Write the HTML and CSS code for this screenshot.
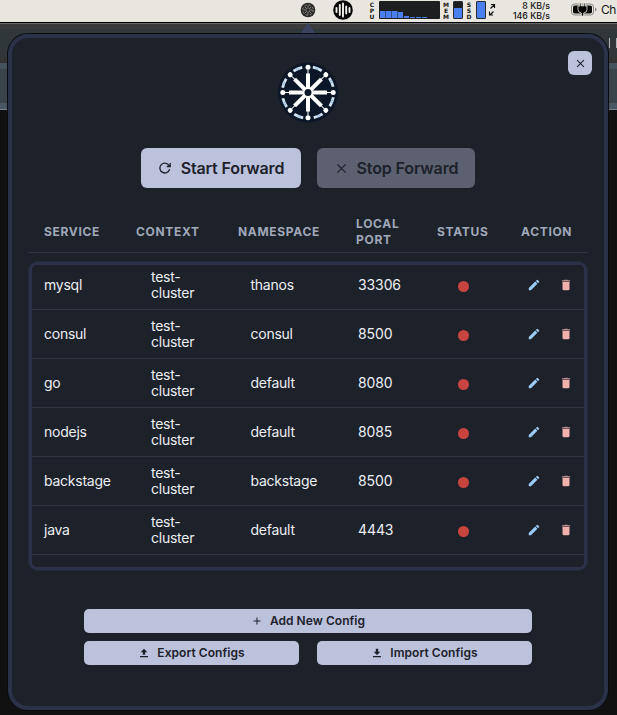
FILE: index.html
```html
<!DOCTYPE html>
<html lang="en">
<head>
<meta charset="utf-8">
<title>Port forwards</title>
<link rel="stylesheet" href="styles.css">
</head>
<body>
<svg class="defs" aria-hidden="true">
  <symbol id="pencil" viewBox="0 0 24 24"><path d="M3 17.25V21h3.75L17.81 9.94l-3.75-3.75L3 17.25zM20.71 7.04a1 1 0 0 0 0-1.41l-2.34-2.34a1 1 0 0 0-1.41 0l-1.83 1.83 3.75 3.75 1.83-1.83z" fill="currentColor"/></symbol>
  <symbol id="trash" viewBox="0 0 24 24"><path d="M6 7v12c0 1.1.9 2 2 2h8c1.1 0 2-.9 2-2V7z" fill="currentColor"/><path d="M19 4h-3.500l-1-1h-5l-1 1H5v2h14V4z" fill="currentColor" opacity=".75"/></symbol>
  <symbol id="cross" viewBox="0 0 12 12"><path d="M1.500 1.500l9 9m0-9l-9 9" stroke="currentColor" stroke-width="1.400" fill="none"/></symbol>
</svg>

<header class="menubar">
  <svg class="mi-wheel" viewBox="0 0 16 16"><circle cx="8" cy="8" r="7.300" fill="#2c2b2a"/><circle cx="8" cy="8" r="5.200" fill="none" stroke="#8f8d88" stroke-width="1" stroke-dasharray="2 2.080"/><path d="M8 3.500v9M3.500 8h9M4.800 4.800l6.400 6.400m0-6.400l-6.400 6.400" stroke="#a5a39d" stroke-width=".7"/><circle cx="8" cy="8" r="1.500" fill="#2c2b2a"/></svg>
  <svg class="mi-audio" viewBox="0 0 20 20"><circle cx="10" cy="10" r="9.800" fill="#050505"/><path d="M3.500 8v4M6.800 5v10M10 3.500v13M13.200 6.500v7M16.500 8v4" stroke="#f4f2ec" stroke-width="1.900" stroke-linecap="round"/></svg>
  <div class="vlabel cpu-label"><span>C</span><span>P</span><span>U</span></div>
  <svg class="cpu" viewBox="0 0 61 18"><rect width="61" height="18" rx="1" fill="#1d1e1f"/><path d="M1 17V10h5.500v7zM7 17V10h5.500v7zM13 17V10h5.500v7zM19 17v-6h5v6zM25 17v-2h5v2zM31 17v-1h5v1zM37 17v-1h5v1zM43 17v-1h5v1z" fill="#4a7ff0"/></svg>
  <div class="vlabel mem-label"><span>M</span><span>E</span><span>M</span></div>
  <div class="meter mem"></div>
  <div class="vlabel ssd-label"><span>S</span><span>S</span><span>D</span></div>
  <div class="meter"></div>
  <svg class="mi-arrows" viewBox="0 0 8 14"><path d="M2.500 5.500l3.500-3.500M3 1.500h3.500V5M5.500 8.500L2 12M1.500 8.500V12H5" stroke="#151515" stroke-width="1.200" fill="none"/></svg>
  <div class="net"><span>8 KB/s</span><span>146 KB/s</span></div>
  <svg class="battery" viewBox="0 0 26 13"><rect x=".5" y="1" width="22" height="11" rx="3" fill="none" stroke="#8b8984"/><rect x="2" y="2.500" width="19" height="8" rx="1.700" fill="#080808"/><path d="M24 4.500v4q1.500-.5 1.500-2t-1.500-2z" fill="#8b8984"/><path d="M9 0v3H7v3.500q0 3 3.300 3.500v3h2.400v-3q3.300-.5 3.300-3.500V3h-2V0h-1.500v3h-2V0z" fill="#080808" stroke="#e8e6df" stroke-width=".8"/></svg>
  <span class="clock">Ch</span>
</header>

<div class="desktop">
  <svg class="notch" viewBox="0 0 18 12"><path d="M0 12C3 10 7 1 9 0c2 1 6 10 9 12z" fill="#39425f"/></svg>
  <div class="ticks"></div>
  <main class="panel">
    <button class="close" aria-label="Close"><svg viewBox="0 0 12 12"><use href="#cross"/></svg></button>
    <svg class="logo" viewBox="-30 -30 60 60">
      <circle r="30" fill="#0b1729"/>
      <g fill="none"><g id="arc"><path d="M4.800-25.300A25.700 25.700 0 0 1 13.700-21.800" stroke="#d3e4ee" stroke-width="2.800"/><path d="M7.500-24.600l3.500 1.300" stroke="#78b4e8" stroke-width="1.600" stroke-dasharray="1 1"/></g>
      <use href="#arc" transform="rotate(45)"/><use href="#arc" transform="rotate(90)"/><use href="#arc" transform="rotate(135)"/><use href="#arc" transform="rotate(180)"/><use href="#arc" transform="rotate(225)"/><use href="#arc" transform="rotate(270)"/><use href="#arc" transform="rotate(315)"/></g>
      <g fill="#fff"><g id="spoke"><rect x="-2" y="-19" width="4" height="15.500"/><rect x="-.5" y="-23" width="1" height="5"/><circle cy="-25.200" r="2.500"/></g>
      <use href="#spoke" transform="rotate(45)"/><use href="#spoke" transform="rotate(90)"/><use href="#spoke" transform="rotate(135)"/><use href="#spoke" transform="rotate(180)"/><use href="#spoke" transform="rotate(225)"/><use href="#spoke" transform="rotate(270)"/><use href="#spoke" transform="rotate(315)"/></g>
      <circle r="4.500" fill="#fff"/><circle r="3.500" fill="#0b1729"/>
    </svg>

    <div class="controls">
      <button class="btn start"><svg viewBox="0 0 12 12"><path d="M10.600 7.100A4.900 4.900 0 1 1 9.800 3.200L11 4.400M11.200 1v3.500H7.700" fill="none" stroke="currentColor" stroke-width="1.300"/></svg><span>Start Forward</span></button>
      <button class="btn stop" disabled><svg viewBox="0 0 12 12"><use href="#cross"/></svg><span>Stop Forward</span></button>
    </div>

    <div class="thead"><span>SERVICE</span><span>CONTEXT</span><span>NAMESPACE</span><span>LOCAL<br>PORT</span><span>STATUS</span><span>ACTION</span></div>
    <section class="tbody">
      <div class="row"><span>mysql</span><span>test-<br>cluster</span><span>thanos</span><span class="port">33306</span><i class="dot"></i><svg class="edit"><use href="#pencil"/></svg><svg class="del"><use href="#trash"/></svg></div>
      <div class="row"><span>consul</span><span>test-<br>cluster</span><span>consul</span><span class="port">8500</span><i class="dot"></i><svg class="edit"><use href="#pencil"/></svg><svg class="del"><use href="#trash"/></svg></div>
      <div class="row"><span>go</span><span>test-<br>cluster</span><span>default</span><span class="port">8080</span><i class="dot"></i><svg class="edit"><use href="#pencil"/></svg><svg class="del"><use href="#trash"/></svg></div>
      <div class="row"><span>nodejs</span><span>test-<br>cluster</span><span>default</span><span class="port">8085</span><i class="dot"></i><svg class="edit"><use href="#pencil"/></svg><svg class="del"><use href="#trash"/></svg></div>
      <div class="row"><span>backstage</span><span>test-<br>cluster</span><span>backstage</span><span class="port">8500</span><i class="dot"></i><svg class="edit"><use href="#pencil"/></svg><svg class="del"><use href="#trash"/></svg></div>
      <div class="row"><span>java</span><span>test-<br>cluster</span><span>default</span><span class="port">4443</span><i class="dot"></i><svg class="edit"><use href="#pencil"/></svg><svg class="del"><use href="#trash"/></svg></div>
    </section>

    <div class="configs">
      <button class="small wide"><svg viewBox="0 0 10 10"><path d="M5 1.500v7M1.500 5h7" stroke="currentColor" stroke-width="1"/></svg><span>Add New Config</span></button>
      <button class="small"><svg viewBox="0 0 10 10"><path d="M5 .7l3.300 3.500H6.200v2.600H3.800V4.200H1.700zM1 8.100h8v1.100H1z" fill="currentColor"/></svg><span>Export Configs</span></button>
      <button class="small"><svg viewBox="0 0 10 10"><path d="M5 7L1.700 3.700h2.100V.8h2.400v2.900h2.100zM1 8.100h8v1.100H1z" fill="currentColor"/></svg><span>Import Configs</span></button>
    </div>
  </main>
</div>
</body>
</html>
```

FILE: styles.css
```css
* { box-sizing: border-box; }
body {
  margin: 0;
  width: 617px;
  height: 715px;
  overflow: hidden;
  background: #111;
  font-family: Inter, "Liberation Sans", sans-serif;
  color: #eceef2;
}
.defs { position: absolute; width: 0; height: 0; }
svg { display: block; flex: none; }
button { border: 0; padding: 0; font: inherit; color: #1d212b; background: #bcc1dc; }

.menubar {
  display: flex;
  align-items: flex-start;
  height: 23px;
  background: #e8e6df;
  border-bottom: 1px solid #000;
  color: #151515;
  white-space: nowrap;
}
.mi-wheel { width: 16px; height: 16px; margin: 2px 0 0 300px; }
.mi-audio { width: 20px; height: 20px; margin-left: 17px; }
.vlabel {
  display: flex;
  flex-direction: column;
  align-items: center;
  gap: 1px;
  width: 8px;
  padding-top: 2px;
  font: bold 6px/5px "DejaVu Sans", sans-serif;
}
.vlabel span { height: 5px; }
.cpu-label { margin-left: 15px; }
.cpu { width: 61px; height: 18px; margin: 1px 0 0 3px; }
.mem-label { margin-left: 2px; }
.ssd-label { margin-left: 2px; }
.meter { width: 10px; height: 18px; margin: 1px 0 0 3px; border: 1px solid #252a33; border-radius: 1px; background: #4a7ff0; }
.mem { background: linear-gradient(#1d1e1f 6px, #4a7ff0 6px); }
.mi-arrows { width: 8px; height: 14px; margin: 3px 0 0 2px; }
.net {
  display: flex;
  flex-direction: column;
  align-items: flex-end;
  width: 54px;
  padding-top: 1px;
  font-size: 8.800px;
  font-weight: 500;
  line-height: 9.500px;
}
.battery { width: 26px; height: 13px; margin: 3px 0 0 21px; }
.clock { margin-left: 4px; font-size: 12px; letter-spacing: -.4px; line-height: 20px; }

.desktop {
  position: relative;
  height: 692px;
  padding: 11px 9px 5px 8px;
  background: linear-gradient(#686868 0 1px, #3b3b3b 1px 6px, #2f373b 6px 34px, #343332 34px 40px, #46535c 40px 46px, #3a4349 46px 80px, #485761 80px 86px, #72818a 86px 87px, #111 87px);
}
.notch { position: absolute; left: 299px; top: 0; width: 18px; height: 12px; }
.ticks { position: absolute; right: 0; top: 15px; width: 14px; height: 10px; background: repeating-linear-gradient(90deg, transparent 0 6px, #b0b4b6 6px 7px); }
.panel {
  position: relative;
  display: flex;
  flex-direction: column;
  align-items: center;
  width: 600px;
  height: 676px;
  padding: 24px 16px 0;
  border: 4px solid #2a3148;
  border-radius: 20px;
  background: #1d212a;
  box-shadow: 0 0 0 1px #090b0e;
}
.close {
  position: absolute;
  top: 13px;
  right: 12px;
  display: grid;
  place-items: center;
  width: 24px;
  height: 24px;
  border-radius: 6px;
}
.close svg { width: 9px; height: 9px; }
.logo { width: 60px; height: 61px; }
.controls { display: flex; gap: 16px; margin-top: 25px; }
.btn {
  display: flex;
  align-items: center;
  justify-content: center;
  gap: 10px;
  width: 160px;
  height: 40px;
  padding-left: 1px;
  border-radius: 6px;
  font-size: 16px;
  font-weight: 600;
  letter-spacing: -.13px;
  white-space: nowrap;
}
.btn svg { width: 12px; height: 12px; }
.stop { width: 158px; padding-left: 2px; background: #5c6070; }
.stop svg { width: 11px; height: 11px; }

.thead {
  display: grid;
  grid-template-columns: 92px 102px 118px 81px 84px 1fr;
  align-items: center;
  width: 560px;
  height: 65px;
  padding: 24px 0 0 16px;
  border-bottom: 1px solid #303644;
  color: #a0a8b9;
  font-size: 12px;
  font-weight: 700;
  line-height: 16px;
  letter-spacing: .68px;
}
.tbody {
  position: relative;
  width: 560px;
  height: 310px;
  margin-top: 8px;
}
.tbody::after {
  content: "";
  position: absolute;
  inset: 1px;
  border: 3px solid #2a3148;
  border-radius: 8px;
  box-shadow: 0 0 0 1px #242a3a;
  pointer-events: none;
}
.row {
  display: grid;
  grid-template-columns: 107px 99.5px 107.5px 100px 69px 32px 1fr;
  align-items: center;
  height: 49px;
  padding-left: 16px;
  border-bottom: 1px solid #303644;
  font-size: 14px;
  line-height: 16px;
  letter-spacing: -.25px;
}
.port { letter-spacing: -.1px; }
.dot { width: 11px; height: 11px; margin-top: 2px; border-radius: 50%; background: #c8443f; }
.edit, .del { width: 14px; height: 14px; }
.edit { color: #9bccf5; }
.del { color: #f0b0ae; }

.configs { display: grid; grid-template-columns: 215px 215px; gap: 8px 18px; margin-top: 38px; }
.small {
  display: flex;
  align-items: center;
  justify-content: center;
  gap: 8px;
  height: 24px;
  padding: 0 0 1px 1px;
  border-radius: 5px;
  font-size: 12px;
  font-weight: 600;
  letter-spacing: .05px;
}
.small svg { width: 10px; height: 10px; }
.wide { grid-column: span 2; }
```
